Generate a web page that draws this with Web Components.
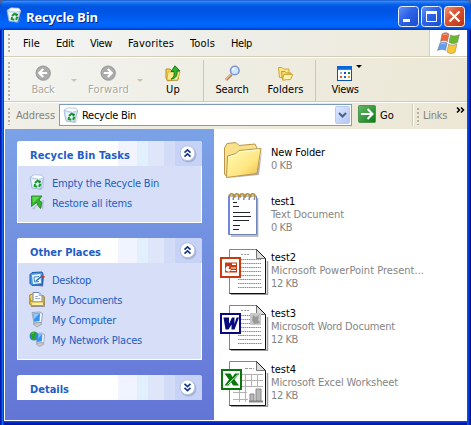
<!DOCTYPE html>
<html lang="en"><head><meta charset="utf-8"><title>Recycle Bin</title>
<style>
body{margin:0;background:#4a6298;font:11px/13px "DejaVu Sans Condensed","DejaVu Sans",sans-serif;color:#000;overflow:hidden}
</style></head><body>
<xp-window label="Recycle Bin">
  <xp-menubar slot="bars">
    <xp-label w="17">File</xp-label><xp-label w="18">Edit</xp-label><xp-label w="22">View</xp-label><xp-label w="46">Favorites</xp-label><xp-label w="25">Tools</xp-label><xp-label w="21">Help</xp-label>
  </xp-menubar>
  <xp-toolbar slot="bars">
    <xp-tool icon="back" style="width:44px;margin-left:3px" off><xp-label w="23">Back</xp-label></xp-tool>
    <xp-arrow style="width:18px;margin-right:3px"></xp-arrow>
    <xp-tool icon="forward" style="width:45px" off><xp-label w="41">Forward</xp-label></xp-tool>
    <xp-arrow style="width:18px"></xp-arrow>
    <xp-tool icon="up" style="width:48px"><xp-label w="14">Up</xp-label></xp-tool>
    <xp-rule style="margin-left:6px"></xp-rule>
    <xp-tool icon="search" style="width:54px;margin-left:1px"><xp-label w="33">Search</xp-label></xp-tool>
    <xp-tool icon="folders" style="width:53px"><xp-label w="36">Folders</xp-label></xp-tool>
    <xp-rule style="margin-left:3px"></xp-rule>
    <xp-tool icon="views" style="width:54px;margin-left:2px"><xp-label w="27">Views</xp-label></xp-tool>
  </xp-toolbar>
  <xp-address slot="bars">Recycle Bin</xp-address>
  <xp-pane slot="side">
    <xp-panel label="Recycle Bin Tasks" w="100" style="height:82px">
      <xp-link icon="bin" w="107">Empty the Recycle Bin</xp-link>
      <xp-link icon="restore" w="80">Restore all items</xp-link>
    </xp-panel>
    <xp-panel label="Other Places" w="71" style="height:122px">
      <xp-link icon="desktop" w="39">Desktop</xp-link>
      <xp-link icon="docs" w="70">My Documents</xp-link>
      <xp-link icon="computer" w="64">My Computer</xp-link>
      <xp-link icon="network" w="90">My Network Places</xp-link>
    </xp-panel>
    <xp-panel label="Details" w="39" closed style="height:25px"></xp-panel>
  </xp-pane>
  <xp-file icon="folder" w="54" label="New Folder"><xp-label w="21">0 KB</xp-label></xp-file>
  <xp-file icon="text" w="24" label="test1"><xp-label w="73">Text Document</xp-label><xp-label w="21">0 KB</xp-label></xp-file>
  <xp-file icon="ppt" w="25" label="test2"><xp-label w="153">Microsoft PowerPoint Present...</xp-label><xp-label w="27">12 KB</xp-label></xp-file>
  <xp-file icon="word" w="25" label="test3"><xp-label w="124">Microsoft Word Document</xp-label><xp-label w="27">12 KB</xp-label></xp-file>
  <xp-file icon="excel" w="25" label="test4"><xp-label w="127">Microsoft Excel Worksheet</xp-label><xp-label w="27">12 KB</xp-label></xp-file>
</xp-window>
<script>
const svg=(w,h,body)=>`<svg width="${w}" height="${h}" viewBox="0 0 ${w} ${h}">${body}</svg>`;
const bin=`<path d="M3 14.5 13 15.5 15.5 6 14 14Z" fill="#8293b8" opacity=".6"/><path d="M1 3.5 3 14 11.500 15.200 14.800 3.500 12 1.500 4 1.500Z" fill="#d3e4f5" stroke="#92aed0" stroke-width=".8"/><path d="M1 3.500 5 .8 13 1.200 14.800 4 9.500 5.200Z" fill="#f9fcff" stroke="#a5bddb" stroke-width=".7"/><path d="M2.500 5.500 4 13 8.500 13.800 9.200 6.500Z" fill="#eef6fd"/><path d="M6 9 8.500 6.700 11 8.300 M11.500 9.800 10 12.700 M8.300 12.700 5.700 12.100 6 10" fill="none" stroke="#189a25" stroke-width="2"/><path d="M9.500 6.500 12 7 11 9.300Z" fill="#08771a"/>`;
const page=(lines)=>`<path d="M12 47.2H48.5V14" fill="none" stroke="#9b9b9b" stroke-width="1.5"/><path d="M10.5 2.5H37.5L46.5 11.5V46.5H10.5Z" fill="#fff"/><path d="M10.5 46.5V2.5H37.5" fill="none" stroke="#858585"/><path d="M37.5 2.5 46.5 11.5V46.5H10.5" fill="none" stroke="#111"/><path d="M37.5 2.5V11.5H46.5Z" fill="#ddd" stroke="#777"/><path d="M37.5 2.5 46.5 11.5" stroke="#111"/>${lines}`;
const dots=(y0,y1)=>{let s='';for(let y=y0;y<=y1;y+=4)s+=`<path d="M19 ${y}.5H${y>38?43:42}" stroke="#8d8d8d" stroke-dasharray="1.6 .6"/>`;return s};
const badge=(c,b)=>`<rect x="2" y="11" width="19" height="19" fill="#fff" stroke="${c}" stroke-width="2"/>${b}`;
const ball=(d)=>`<circle cx="8.7" cy="8.5" r="7.4" fill="#c5c5c1"/><circle cx="8" cy="8" r="7" fill="#acacac" stroke="#999"/><path d="${d}" fill="none" stroke="#fff" stroke-width="2.2"/>`;
const monitor=`<path d="M4 13 9 10.5 13 13 8 16Z" fill="#c9c9cc" stroke="#8b8c98" stroke-width=".6"/><path d="M3 1.5 11 1 13.5 2.5 12.5 11.5 5 12Z" fill="#d9e2ee" stroke="#7d8aa8" stroke-width=".7"/><path d="M4 2.5 11 2.2 10.5 10 5.2 10.8Z" fill="#3793f0"/><path d="M4.5 3 10.5 2.5 5.2 8Z" fill="#86caff"/><path d="M12 3 11.5 11" stroke="#fff"/>`;
const ICONS={
bin:svg(16,16,bin),
restore:svg(16,16,`<path d="M3 15 5 15.5 8.5 11 14 15.5 15 6 11 7Z" fill="#9a9ab4" opacity=".5"/><path d="M2.500 2H13L10 6 12.800 8.500 11.500 14.500 9 11.500 7.500 8.500 2.500 12.500Z" fill="#2fb42a" stroke="#2b8530" stroke-width=".9"/><path d="M3.200 2.800H11L4 9Z" fill="#63d64d"/>`),
desktop:svg(16,16,`<path d="M3 14.5 14 15.5 15 5Z" fill="#66729a"/><path d="M1 3.5 3 1.5 13 1 14 3 13.5 13.5 3 14.5 1 12.5Z" fill="#4898e4" stroke="#1b5aac"/><path d="M3 4 11.5 3 12 12 4 13Z" fill="#eef7ff"/><path d="M5 6 10 5.5 M5 6 5.5 11 10 10.5" stroke="#4785c4" fill="none"/><path d="M7 10 13.5 4.5" stroke="#256cbc" stroke-width="1.6"/><path d="M13 5.5 15.5 6" stroke="#d83420" stroke-width="2"/>`),
docs:svg(16,16,`<path d="M2 15.5H15.5V6" fill="none" stroke="#9290a0"/><path d="M.7 4 3.5 3 15 5V14L2.5 15 .7 13Z" fill="#f2d25a" stroke="#b08817"/><path d="M4 1.5H10L13 4.5V11H4Z" fill="#fff" stroke="#6e84b8"/><path d="M10 1.5V4.5H13 M6 5.5H9 M6 7.5H11" fill="none" stroke="#9cb2d6"/><path d="M1 7.5 3 11H14.5V14.5H2.5Z" fill="#fff0a0" stroke="#c39825"/>`),
computer:svg(16,16,monitor),
network:svg(16,16,`<g transform="translate(3.4 1.2) scale(.9)">${monitor}</g><circle cx="5" cy="5" r="4.5" fill="#3384db"/><path d="M1 4 3 1 6 1 8 3 6 5 6 8 3 8 2 5Z" fill="#27a32c"/><path d="M2 3 4 1.5 5 2Z" fill="#a4e977"/>`),
back:svg(17,17,ball('M12.2 8H5 M8.2 4 4.3 8 8.2 12')),
forward:svg(17,17,ball('M3.8 8H11 M7.8 4 11.7 8 7.8 12')),
up:svg(16,17,`<path d="M2 16H13L15.5 5Z" fill="#b1ac91"/><path d="M1 4H5L6.5 5.5H13.5V14L2.5 16 1 13Z" fill="#efd153" stroke="#bb8f22"/><path d="M3 7H15L12.5 15H2Z" fill="#fbeb8f" stroke="#cfa234" stroke-width=".7"/><path d="M6 14C9 12.5 9.5 10 9 6.5H6L10 .8 14.8 5.8H12C12.5 10.5 11 13.5 6 14Z" fill="#2fb62b" stroke="#127017" stroke-width=".9"/>`),
search:svg(17,17,`<path d="M2 15 7.5 9.5" stroke="#a8836a" stroke-width="2.8"/><path d="M1.7 14.5 7 9" stroke="#f0b983" stroke-width="1.3"/><circle cx="10.8" cy="5.5" r="4.3" fill="#cce8ff" stroke="#8395cb" stroke-width="1.6"/><path d="M8.5 5C9 3.5 10 3 11 3" stroke="#fff" stroke-width="1.2" fill="none"/>`),
folders:svg(17,17,`<path d="M1.500 2.500H5L6.500 4H12V12.500H2.500Z" fill="#fbe588" stroke="#d0a63c"/><path d="M4.500 6.500H8L9.500 8H14V13.500L5.500 15Z" fill="#f7da6c" stroke="#c99c2f"/><path d="M6.800 9.500H15.800L13.500 14.500 5.500 15Z" fill="#fff4ae" stroke="#cfa53c"/>`),
views:svg(17,17,`<rect x=".5" y="1.500" width="14" height="14" fill="#fff" stroke="#0853b7"/><path d="M0 3H15" stroke="#0b68da" stroke-width="3.600"/><path d="M3 7h2v2H3z" fill="#93a8d0"/><path d="M7 7h2v2H7z" fill="#1c48be"/><path d="M11 7h2v2h-2z" fill="#13903f"/><path d="M3 11h2v2H3z" fill="#e3561e"/><path d="M7 11h2v2H7z" fill="#315bb8"/><path d="M11 11h2v2h-2z" fill="#e8a61a"/>`),
flag:svg(26,24,`<g stroke="#807676" stroke-width=".5"><path d="M6 2C9 0 11 .5 13 2L11.5 9.5C9 8 7 8 4.5 9.500Z" fill="#ef6531"/><path d="M14.500 3C17 4.300 20 4.300 23.500 2.500L21.500 10.500C18.500 12 16 12 13 10.500Z" fill="#69b82f"/><path d="M4 11C7 9.500 9 9.700 11.200 11L9.500 18.500C7 17 5 17 1.500 18.500Z" fill="#639eec"/><path d="M12.700 12C15 13.500 18 13.500 21 12L19 20.500C16 22 14 22 11 20Z" fill="#f8c735"/></g><path d="M7 3C9 2 10 2 11.500 3 M5 12C7 11 8 11 9.500 12" fill="none" stroke="#fff" opacity=".45"/>`),
folder:svg(50,48,`<defs><linearGradient id="a" x2="1" y2="1"><stop stop-color="#fffdb9"/><stop offset=".6" stop-color="#ffe681"/><stop offset="1" stop-color="#edba45"/></linearGradient></defs><path d="M9 43 38 38 43 15 40 40Z" fill="#777" opacity=".55"/><path d="M5.500 13 8 8.500 17 7.500 20 10.500 36 9 38 13V34L8 42 5.500 39Z" fill="#f9e08a" stroke="#b8964a" stroke-width="1"/><path d="M8.500 21 17 18.500 20 15.500 42 13.500 38 38.500 7.500 42.500Z" fill="url(#a)" stroke="#b8964a" stroke-width="1"/><path d="M9.700 22 18 19.500 21 16.600 40 14.800" fill="none" stroke="#fffde0"/>`),
text:svg(50,48,`<path d="M12 45H38.500V7" fill="none" stroke="#a9a9b5" stroke-width="1.600"/><path d="M9.500 5H37.500V43.500H9.500Z" fill="#fff" stroke="#6f86b4"/><path d="M10 5V43" stroke="#7087dd" stroke-width="2"/><path d="M14 11.500H18 M14 15.500H20 M14 21.500H31 M14 25.500H32 M14 29.500H30 M14 34.500H21 M14 38.500H20" stroke="#22252d"/><g fill="none" stroke="#b08a35" stroke-width="1.500"><path id="r" d="M11 6.500C9 4 12 1.500 14.500 3.500V7"/><use href="#r" x="5.300"/><use href="#r" x="10.600"/><use href="#r" x="15.900"/><use href="#r" x="21.200"/></g><path d="M13.500 8H37" stroke="#59638d" stroke-width="1.500" stroke-dasharray="1.500 3.800"/>`),
ppt:svg(50,48,page('<path d="M22 7.500H31" stroke="#999" stroke-dasharray="2 1"/>'+dots(12,43))+badge('#c93a10','<path d="M6 15.500H18V25.500H6Z" fill="#c93a10"/><path d="M13 16.500H17V18H13Z M12 20.500H17V21.500H12Z M12 23H17V24H12Z" fill="#fff"/><path d="M10.500 19.500A2.700 2.700 0 1 0 12 22H9.500Z" fill="#fff"/>')),
word:svg(50,48,page('<path d="M22 7.500H31" stroke="#999" stroke-dasharray="2 1"/>'+dots(12,43)+'<path d="M31 10H42V22H31Z" fill="#c9c9c9"/><path d="M34 12 37 14 40 12 39 17 41 20 35 21 33 17Z" fill="#999"/>')+badge('#090980','<path d="M4.500 14.500H10V21L13 14.500H15.500V21L17.500 14.500H20L15.500 26.500H12.500V21.500L9.500 26.500H6.500Z" fill="#090980"/>')),
excel:svg(50,48,page('<path d="M26 9.500H35" stroke="#999" stroke-dasharray="3 1"/><path d="M14 15.500H44 M14 21.500H44 M14 27.500H44 M14 33.500H28 M14 40.500H29 M20.500 15V43 M26.500 15V43 M32.500 15V28 M38.500 15V28" stroke="#b1b1b1"/><path d="M31 35H35V42H31Z M37 30H42V42H37Z" fill="#b8b8b8" stroke="#888"/><path d="M30 42.500H44" stroke="#888" stroke-width="2"/>')+`<g transform="translate(1 0)">${badge('#08780c','<path d="M4.500 14.500H10.500L12.500 18 15 14.500H19.500L14.500 20.500 19 26.500H13L11 23 8.500 26.500H4.500L9 20.500Z" fill="#08780c"/><path d="M7.500 25.500 18 15.500" stroke="#fff" stroke-width=".9"/>')}</g>`)
};
const define=(tag,render,after)=>customElements.define(tag,class extends HTMLElement{
 connectedCallback(){if(this.shadowRoot)return;this.attachShadow({mode:'open'}).innerHTML=render(this);if(after)after(this)}});
/* A single line of text, tracked to occupy the width given by w. */
define('xp-label',()=>`<style>:host{display:block;white-space:nowrap;flex:none;line-height:inherit}span{display:inline-block}</style><span><slot></slot></span>`,e=>{
 const w=+e.getAttribute('w'),s=e.shadowRoot.querySelector('span');e.style.width=w+'px';
 const n=e.textContent.length;s.style.letterSpacing=((w-s.getBoundingClientRect().width)/n)+'px'});
define('xp-icon',e=>`<style>:host{display:block;flex:none}svg{display:block;overflow:visible}</style>${ICONS[e.getAttribute('name')]}`);
define('xp-grip',()=>`<style>:host{display:block;width:3px;flex:none;background:radial-gradient(circle at 1px 1px,#b5b29f 0 1px,transparent 1.3px) 0 0/3px 4px}</style>`);
define('xp-rule',()=>`<style>:host{display:block;width:1px;height:41px;flex:none;background:#cbc7b3}</style>`);
define('xp-arrow',()=>`<style>:host{display:flex;justify-content:center;flex:none;padding-top:19px;box-sizing:border-box}i{width:0;height:0;border:3px solid transparent;border-top-color:#c5c2b6;border-bottom:0}</style><i></i>`);
define('xp-menubar',()=>`<style>:host{display:flex;height:26px;background:linear-gradient(90deg,#f4f5f4,#eeeee8 50%,#eeead9);border-bottom:1px solid #d5ceb6;box-shadow:0 1px #fff}xp-grip{height:19px;margin:4px 0 0 4px}nav{display:flex;gap:16px;flex:1;padding:7px 0 0 12px;font-size:11px}div{width:38px;background:#fff;border-left:1px solid #d5d0bd;display:flex;justify-content:center;padding-top:2px;box-sizing:border-box}</style><xp-grip></xp-grip><nav><slot></slot></nav><div><xp-icon name="flag"></xp-icon></div>`);
define('xp-toolbar',()=>`<style>:host{display:flex;height:44px;margin-top:1px;box-sizing:border-box;background:linear-gradient(105deg,#f3f4f1,#efeee4 45%,#ece7d5);border-bottom:1px solid #d1cbb5;padding:2px 0 0 4px}xp-grip{height:38px;margin:2px 7px 0 0}</style><xp-grip></xp-grip><slot></slot>`);
define('xp-tool',e=>`<style>:host{display:flex;flex-direction:column;align-items:center;flex:none;position:relative;padding-top:5px;box-sizing:border-box}:host([off]){color:#aaa99f;text-shadow:1px 1px #fff}xp-icon{height:18px}i{position:absolute;top:5px;right:10px;border:3px solid transparent;border-top-color:#000;border-bottom:0}</style><xp-icon name="${e.getAttribute('icon')}"></xp-icon><slot></slot>${e.getAttribute('icon')=='views'?'<i></i>':''}`);
define('xp-address',e=>`<style>:host{display:flex;height:27px;box-sizing:border-box;background:linear-gradient(90deg,#f0efe8,#ece7d5);border-top:1px solid #fff;padding:1px 0 0 4px}xp-grip{height:17px;margin:4px 5px 0 0}.g{color:#858476;margin-top:5px}.box{display:flex;box-sizing:border-box;width:293px;height:22px;border:1px solid #7f9db9;background:#fff;margin-left:4px}.box xp-icon{margin:2px 0 0 3px}.box xp-label{margin:4px 0 0 3px}b{box-sizing:border-box;width:15px;height:18px;margin:1px 1px 1px auto;border-radius:2px;background:linear-gradient(135deg,#dce7ff,#b4c8f6);border:1px solid #b7caf5}b svg,.go{display:block}.go{margin:1px 4px 0 6px}.links{display:flex;height:22px;margin-left:18px;border-left:1px solid #d1ccb9;box-shadow:inset 1px 0 #fff;padding-left:4px}</style>
<xp-grip></xp-grip><xp-label class="g" w="39">Address</xp-label><div class="box"><xp-icon name="bin"></xp-icon><xp-label w="54">${e.textContent}</xp-label><b><svg width="13" height="16"><path d="M3 6 6.500 9.500 10 6" fill="none" stroke="#4c6189" stroke-width="2"/></svg></b></div>
<svg class="go" width="18" height="19"><defs><linearGradient id="g" x2="1" y2="1"><stop stop-color="#66b968"/><stop offset="1" stop-color="#0c7b18"/></linearGradient></defs><rect x=".5" y=".5" width="17" height="17" rx="1" fill="url(#g)" stroke="#4c9650"/><path d="M3 9H14 M9.500 4 14.500 9 9.500 14" fill="none" stroke="#fff" stroke-width="2"/></svg><xp-label w="14" style="margin-top:5px">Go</xp-label>
<div class="links"><xp-grip></xp-grip><xp-label class="g" w="24" style="margin-left:-2px">Links</xp-label><svg width="18" height="20"><path d="M10 3.500 12.500 6 10 8.500 M14 3.500 16.500 6 14 8.500" fill="none" stroke="#000" stroke-width="1.500"/></svg></div>`);
define('xp-window',e=>`<style>:host{display:flex;flex-direction:column;width:471px;height:425px;box-sizing:border-box;border-radius:7px 7px 0 0;background:linear-gradient(90deg,#0019ae 0 1px,#0038d8 1px 2px,#1668f0 2px 3px,#0044da 3px 4px,transparent 4px 467px,#0650ee 467px 468px,#0042df 468px 469px,#0020b0 469px 470px,#00128b 470px),linear-gradient(#0049e6 0 422px,#0031cf 422px 423px,#001ba0 423px)}
header{height:30px;box-sizing:border-box;display:flex;border-radius:7px 7px 0 0;background:linear-gradient(#0842b9 0,#3c8ef8 1px,#2880f5 2px,#0765eb 4px,#0054e2 7px,#0055e4 12px,#005cf0 18px,#0066fc 23px,#0062fa 27px,#0046d1 29px,#003cc5 30px);padding:6px 6px 0 6px;color:#fff}
header xp-icon{margin:1px 4px 0 0}header xp-label{font:bold 13px/16px "Open Sans","Noto Sans",sans-serif;text-shadow:1px 1px #0a2490;margin-top:3px}
nav{margin-left:auto;display:flex;gap:2px}nav svg{display:block}.body{width:463px;margin-left:4px;height:391px;display:flex;flex-direction:column;background:#ece9d8}.main{display:flex;flex:1;background:#fff;padding-left:1px;min-height:0}.files{display:flex;flex-direction:column;padding:2px 0 0 5px}</style>
<header><xp-icon name="bin"></xp-icon><xp-label w="72">${e.getAttribute('label')}</xp-label><nav>
<svg width="21" height="21"><defs><linearGradient id="b" x2="1" y2="1"><stop stop-color="#6591f8"/><stop offset=".45" stop-color="#2d62e7"/><stop offset="1" stop-color="#194dcc"/></linearGradient><linearGradient id="c" x2="1" y2="1"><stop stop-color="#f39a7e"/><stop offset=".4" stop-color="#dc5532"/><stop offset="1" stop-color="#b83212"/></linearGradient></defs><rect x=".5" y=".5" width="20" height="20" rx="3" fill="url(#b)" stroke="#e8efff"/><path d="M5 14.500H12" stroke="#fff" stroke-width="3"/></svg>
<svg width="21" height="21"><rect x=".5" y=".5" width="20" height="20" rx="3" fill="url(#b)" stroke="#e8efff"/><path d="M5.500 6V15.500H15.500V6" fill="none" stroke="#fff"/><path d="M5 6.500H16" stroke="#fff" stroke-width="3"/></svg>
<svg width="21" height="21"><rect x=".5" y=".5" width="20" height="20" rx="3" fill="url(#c)" stroke="#fff0ec"/><path d="M5.500 5.500 15.500 15.500 M15.500 5.500 5.500 15.500" stroke="#fff" stroke-width="2.200"/></svg></nav></header>
<div class="body"><slot name="bars"></slot><div class="main"><slot name="side"></slot><div class="files"><slot></slot></div></div></div>`);
define('xp-pane',()=>`<style>:host{display:flex;flex-direction:column;gap:15px;width:209px;height:291px;box-sizing:border-box;padding:12px 12px 0;background:linear-gradient(#7ba2e7,#6375d6);flex:none}</style><slot></slot>`);
define('xp-panel',e=>{const c=e.hasAttribute('closed');return `<style>:host{display:block;width:185px;box-sizing:border-box;background:#d6dff7;border:1px solid #fff;border-top:0;border-radius:3px 3px 0 0;flex:none;color:#215dc6}:host([closed]){border-width:0;padding:0 1px}header{margin:0 -1px;height:25px;box-sizing:border-box;border-radius:3px 3px 0 0;background:linear-gradient(90deg,#fff 0 101px,#f1f3ff 101px 120px,#e2effd 120px 131px,#dfe6fa 131px 147px,#d3dcf7 147px 158px,#c7d3f6 158px);display:flex;padding:8px 6px 0 13px}header xp-label{font-weight:bold;line-height:13px}svg{display:block;margin:-4px -1px 0 auto}.l{display:flex;flex-direction:column;padding:8px 0 0 11px}</style>
<header><xp-label w="${e.getAttribute('w')}">${e.getAttribute('label')}</xp-label><svg width="18" height="18"><circle cx="9.500" cy="9.500" r="8" fill="#a7b2d8"/><circle cx="8.500" cy="8.200" r="7.400" fill="#fff" stroke="#b5c0df"/><g ${c?'transform="matrix(1 0 0 -1 0 16.400)"':''}><path d="M5.500 7.600 8.500 4.800 11.500 7.600 M5.500 11.600 8.500 8.800 11.500 11.600" fill="none" stroke="#12348c" stroke-width="1.600"/></g></svg></header><div class="l"><slot></slot></div>`});
define('xp-link',e=>`<style>:host{display:flex;height:20px;gap:7px}xp-label{padding-top:3px}</style><xp-icon name="${e.getAttribute('icon')}"></xp-icon><xp-label w="${e.getAttribute('w')}">${e.textContent}</xp-label>`);
define('xp-file',e=>`<style>:host{display:flex;height:56px;align-items:center;gap:2px;color:#858585}div{display:flex;flex-direction:column;padding-bottom:2px}:host([icon=folder]) div{padding:0}.n{color:#000}</style><xp-icon name="${e.getAttribute('icon')}"></xp-icon><div><xp-label class="n" w="${e.getAttribute('w')}">${e.getAttribute('label')}</xp-label><slot></slot></div>`);
</script></body></html>
